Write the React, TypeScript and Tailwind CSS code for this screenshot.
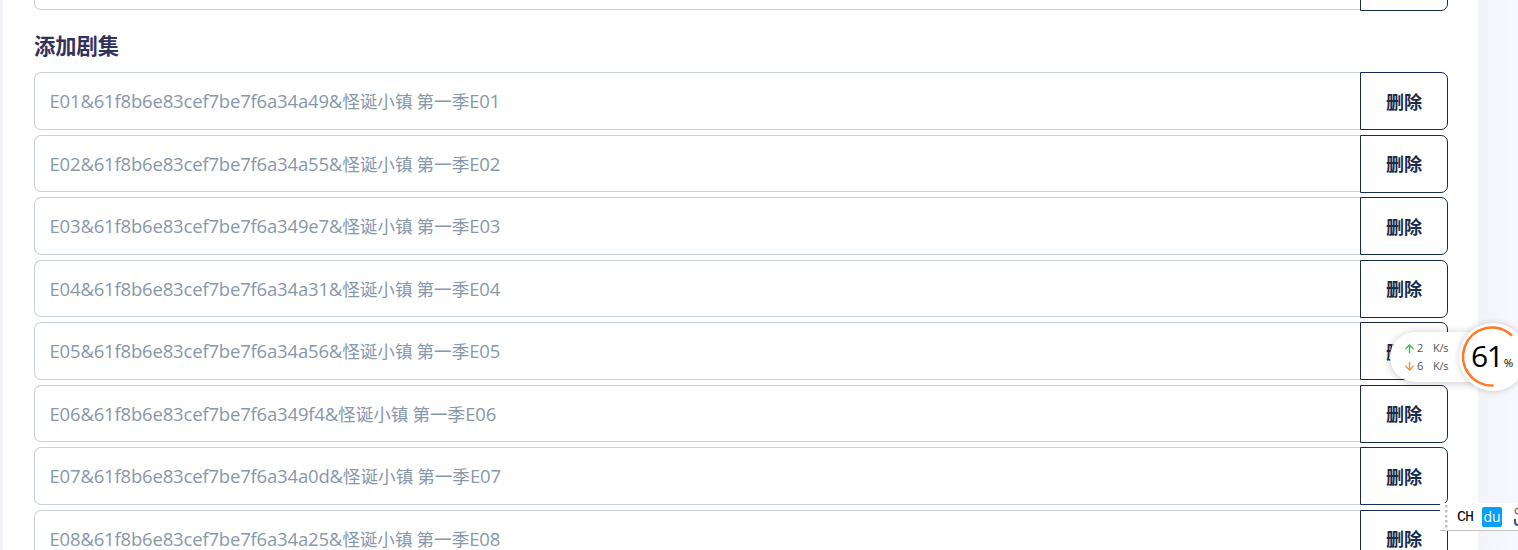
interface Episode {
  id: string;
  hash: string;
}

const episodes: Episode[] = [
  { id: "E01", hash: "61f8b6e83cef7be7f6a34a49" },
  { id: "E02", hash: "61f8b6e83cef7be7f6a34a55" },
  { id: "E03", hash: "61f8b6e83cef7be7f6a349e7" },
  { id: "E04", hash: "61f8b6e83cef7be7f6a34a31" },
  { id: "E05", hash: "61f8b6e83cef7be7f6a34a56" },
  { id: "E06", hash: "61f8b6e83cef7be7f6a349f4" },
  { id: "E07", hash: "61f8b6e83cef7be7f6a34a0d" },
  { id: "E08", hash: "61f8b6e83cef7be7f6a34a25" },
];

function EpisodeRow({ episode }: { episode?: Episode }) {
  return (
    <div className="flex h-[57.5px] shrink-0">
      <div className="flex min-w-0 flex-1 items-baseline whitespace-pre rounded-l-[7px] border border-r-0 border-[#cad1d7] bg-white pl-[14.5px] leading-[56px] text-[#8898aa]">
        {episode && (
          <>
            <span className="text-[18.5px] tracking-[-0.18px]">
              {episode.id}&amp;{episode.hash}&amp;
            </span>
            <span className="font-['Noto_Sans_CJK_SC',sans-serif] text-[17.6px]">怪诞小镇 第一季</span>
            <span className="text-[18.5px] tracking-[-0.2px]">{episode.id}</span>
          </>
        )}
      </div>
      <button
        type="button"
        className="h-[58px] w-[88px] shrink-0 rounded-r-[7px] border border-[#172b4d] bg-white pt-[0.5px] font-['Noto_Sans_CJK_SC',sans-serif] text-[18px] font-bold text-[#172b4d]"
      >
        {episode && "删除"}
      </button>
    </div>
  );
}

function SpeedWidget() {
  return (
    <div className="absolute left-[1390px] top-[323px] h-[68px] w-[136px]">
      <div className="absolute left-0 top-[9px] flex h-[50px] w-[100px] flex-col justify-center rounded-l-full bg-white pl-[15px] text-[11px] leading-[18px] text-[#555] shadow-[0_1px_8px_rgba(0,0,0,0.22)]">
        <div className="flex items-center">
          <svg width="9" height="9" viewBox="0 0 9 9" fill="none" stroke="#3dba55" strokeWidth="1.4">
            <path d="M4.5 9V1M.5 5l4-4 4 4" />
          </svg>
          <span className="ml-[3px] w-[16px]">2</span>
          <span className="tracking-[-0.2px]">K/s</span>
        </div>
        <div className="flex items-center">
          <svg width="9" height="9" viewBox="0 0 9 9" fill="none" stroke="#ff8f3c" strokeWidth="1.4">
            <path d="M4.5 0v8M.5 4l4 4 4-4" />
          </svg>
          <span className="ml-[3px] w-[16px]">6</span>
          <span className="tracking-[-0.2px]">K/s</span>
        </div>
      </div>
      <div className="absolute left-[69px] top-0 size-[68px] rounded-full bg-white shadow-[0_0_6px_rgba(0,0,0,0.2)]">
        <svg className="absolute inset-0" width="68" height="68" viewBox="0 0 68 68" fill="none">
          <path d="M53 12.5A29 29 0 1 0 34.5 62.5" stroke="#ff7a22" strokeWidth="2.6" />
        </svg>
        <div className="absolute left-[12px] top-[15px] flex items-baseline leading-[36px] text-black">
          <span className="text-[30px] tracking-[-1.3px]">61</span>
          <span className="ml-px text-[11.5px]">%</span>
        </div>
      </div>
    </div>
  );
}

function LanguageBar() {
  return (
    <div className="absolute left-[1440px] top-[503px] flex h-[28px] w-[78px] items-center overflow-hidden border-b border-[#c4c4c4] bg-white">
      <svg className="ml-[5px] shrink-0" width="3" height="28" viewBox="0 0 3 28" fill="#c2c2c2">
        {[2, 7, 12, 17, 22].map((y) => (
          <rect key={y} y={y} width="2.5" height="2.5" />
        ))}
      </svg>
      <span className="ml-[9px] w-[16px] pt-[3px] font-['Liberation_Mono',monospace] text-[15px] tracking-[-1px] text-black">
        CH
      </span>
      <span className="ml-[9px] flex h-[20px] w-[20px] shrink-0 items-center justify-center rounded-[2px] bg-[#06a0fa] text-[14px] text-white">
        du
      </span>
      <svg className="ml-[12px] shrink-0" width="10" height="20" viewBox="0 0 10 20" fill="none">
        <circle cx="4" cy="4" r="2.8" stroke="#9a7c64" strokeWidth="1.5" />
        <path d="M1 12v3a3 3 0 0 0 3 3h5" stroke="#35588f" strokeWidth="2" />
      </svg>
    </div>
  );
}

export default function App() {
  return (
    <div className="relative h-[550px] w-[1518px] overflow-hidden bg-[#f1f1f6] pl-[3px] font-['Open_Sans','Noto_Sans_CJK_SC',sans-serif]">
      <div className="flex h-full bg-linear-to-r from-[#f2f3f8] from-97% to-[#f8f9fe]">
        <main className="flex w-[1475px] flex-col bg-white pl-[31px] pr-[30px]">
          <div className="-mt-[47.5px]">
            <EpisodeRow />
          </div>
          <h4 className="mt-[19px] h-[43px] shrink-0 font-['Noto_Sans_CJK_SC',sans-serif] text-[21.25px] font-bold leading-[32px] text-[#32325d]">
            添加剧集
          </h4>
          <div className="flex flex-col gap-[5px]">
            {episodes.map((episode) => (
              <EpisodeRow key={episode.id} episode={episode} />
            ))}
          </div>
        </main>
      </div>
      <SpeedWidget />
      <LanguageBar />
    </div>
  );
}
